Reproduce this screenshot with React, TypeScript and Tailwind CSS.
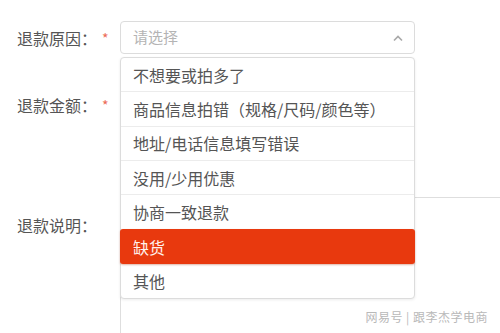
const reasons = [
  '不想要或拍多了',
  '商品信息拍错（规格/尺码/颜色等）',
  '地址/电话信息填写错误',
  '没用/少用优惠',
  '协商一致退款',
  '缺货',
  '其他',
];

function Label({ text, required }: { text: string; required?: boolean }) {
  return (
    <div className="flex w-[103px] shrink-0 items-center text-[16px] leading-[24px] text-[#555]">
      <span>{text}</span>
      {required && <span className="ml-[5px] text-[14px] text-[#ec6a55]">*</span>}
    </div>
  );
}

export default function App() {
  const selected = '缺货';

  return (
    <div className="relative h-[333px] w-[500px] overflow-hidden bg-white font-['Noto_Sans_CJK_SC','Noto_Sans',sans-serif]">
      <div className="pl-[17px] pt-[21px]">
        {/* 退款原因 */}
        <div className="flex items-center">
          <Label text="退款原因：" required />
          <div className="flex h-[33px] w-[295px] shrink-0 items-center justify-between rounded-[4px] border border-[#dcdcdc] pl-[12px] pr-[10px]">
            <span className="text-[15px] text-[#b4b4b4]">请选择</span>
            <svg width="12" height="8" viewBox="0 0 12 8" fill="none">
              <polyline points="2,6.5 6,2.5 10,6.5" stroke="#a8a8a8" strokeWidth="1.6" />
            </svg>
          </div>
        </div>

        {/* 退款金额 */}
        <div className="mt-[34px] flex items-center">
          <Label text="退款金额：" required />
          <div className="h-[33px] w-[295px] shrink-0 rounded-[4px] border border-[#dcdcdc]" />
        </div>

        {/* 退款说明 */}
        <div className="mt-[76px] flex items-start">
          <div className="pt-[16px]">
            <Label text="退款说明：" />
          </div>
          <div className="h-[160px] w-[420px] shrink-0 rounded-[4px] border border-[#dedede]" />
        </div>
      </div>

      {/* dropdown menu */}
      <div className="absolute left-[120px] top-[57px] w-[295px] rounded-[4px] border border-[#dcdcdc] bg-white shadow-[0_1px_3px_rgba(0,0,0,0.08)]">
        {reasons.map((r, i) =>
          r === selected ? (
            <div
              key={r}
              className="-mx-px flex h-[34.3px] items-center rounded-[3px] bg-[#e8390e] pl-[13px] text-[16px] text-[#fff1ec] shadow-[0_1px_2px_rgba(160,40,0,0.35)]"
            >
              {r}
            </div>
          ) : (
            <div
              key={r}
              className={
                'flex h-[34.3px] items-center pl-[12px] text-[16px] text-[#555] ' +
                (i < reasons.length - 1 && reasons[i + 1] !== selected ? 'border-b border-[#ececec]' : '')
              }
            >
              {r}
            </div>
          )
        )}
      </div>

      {/* watermark */}
      <div className="absolute bottom-[7px] right-[12px] text-[12px] tracking-[0.5px] text-[#b9b9b9]">
        网易号 | 跟李杰学电商
      </div>
    </div>
  );
}
